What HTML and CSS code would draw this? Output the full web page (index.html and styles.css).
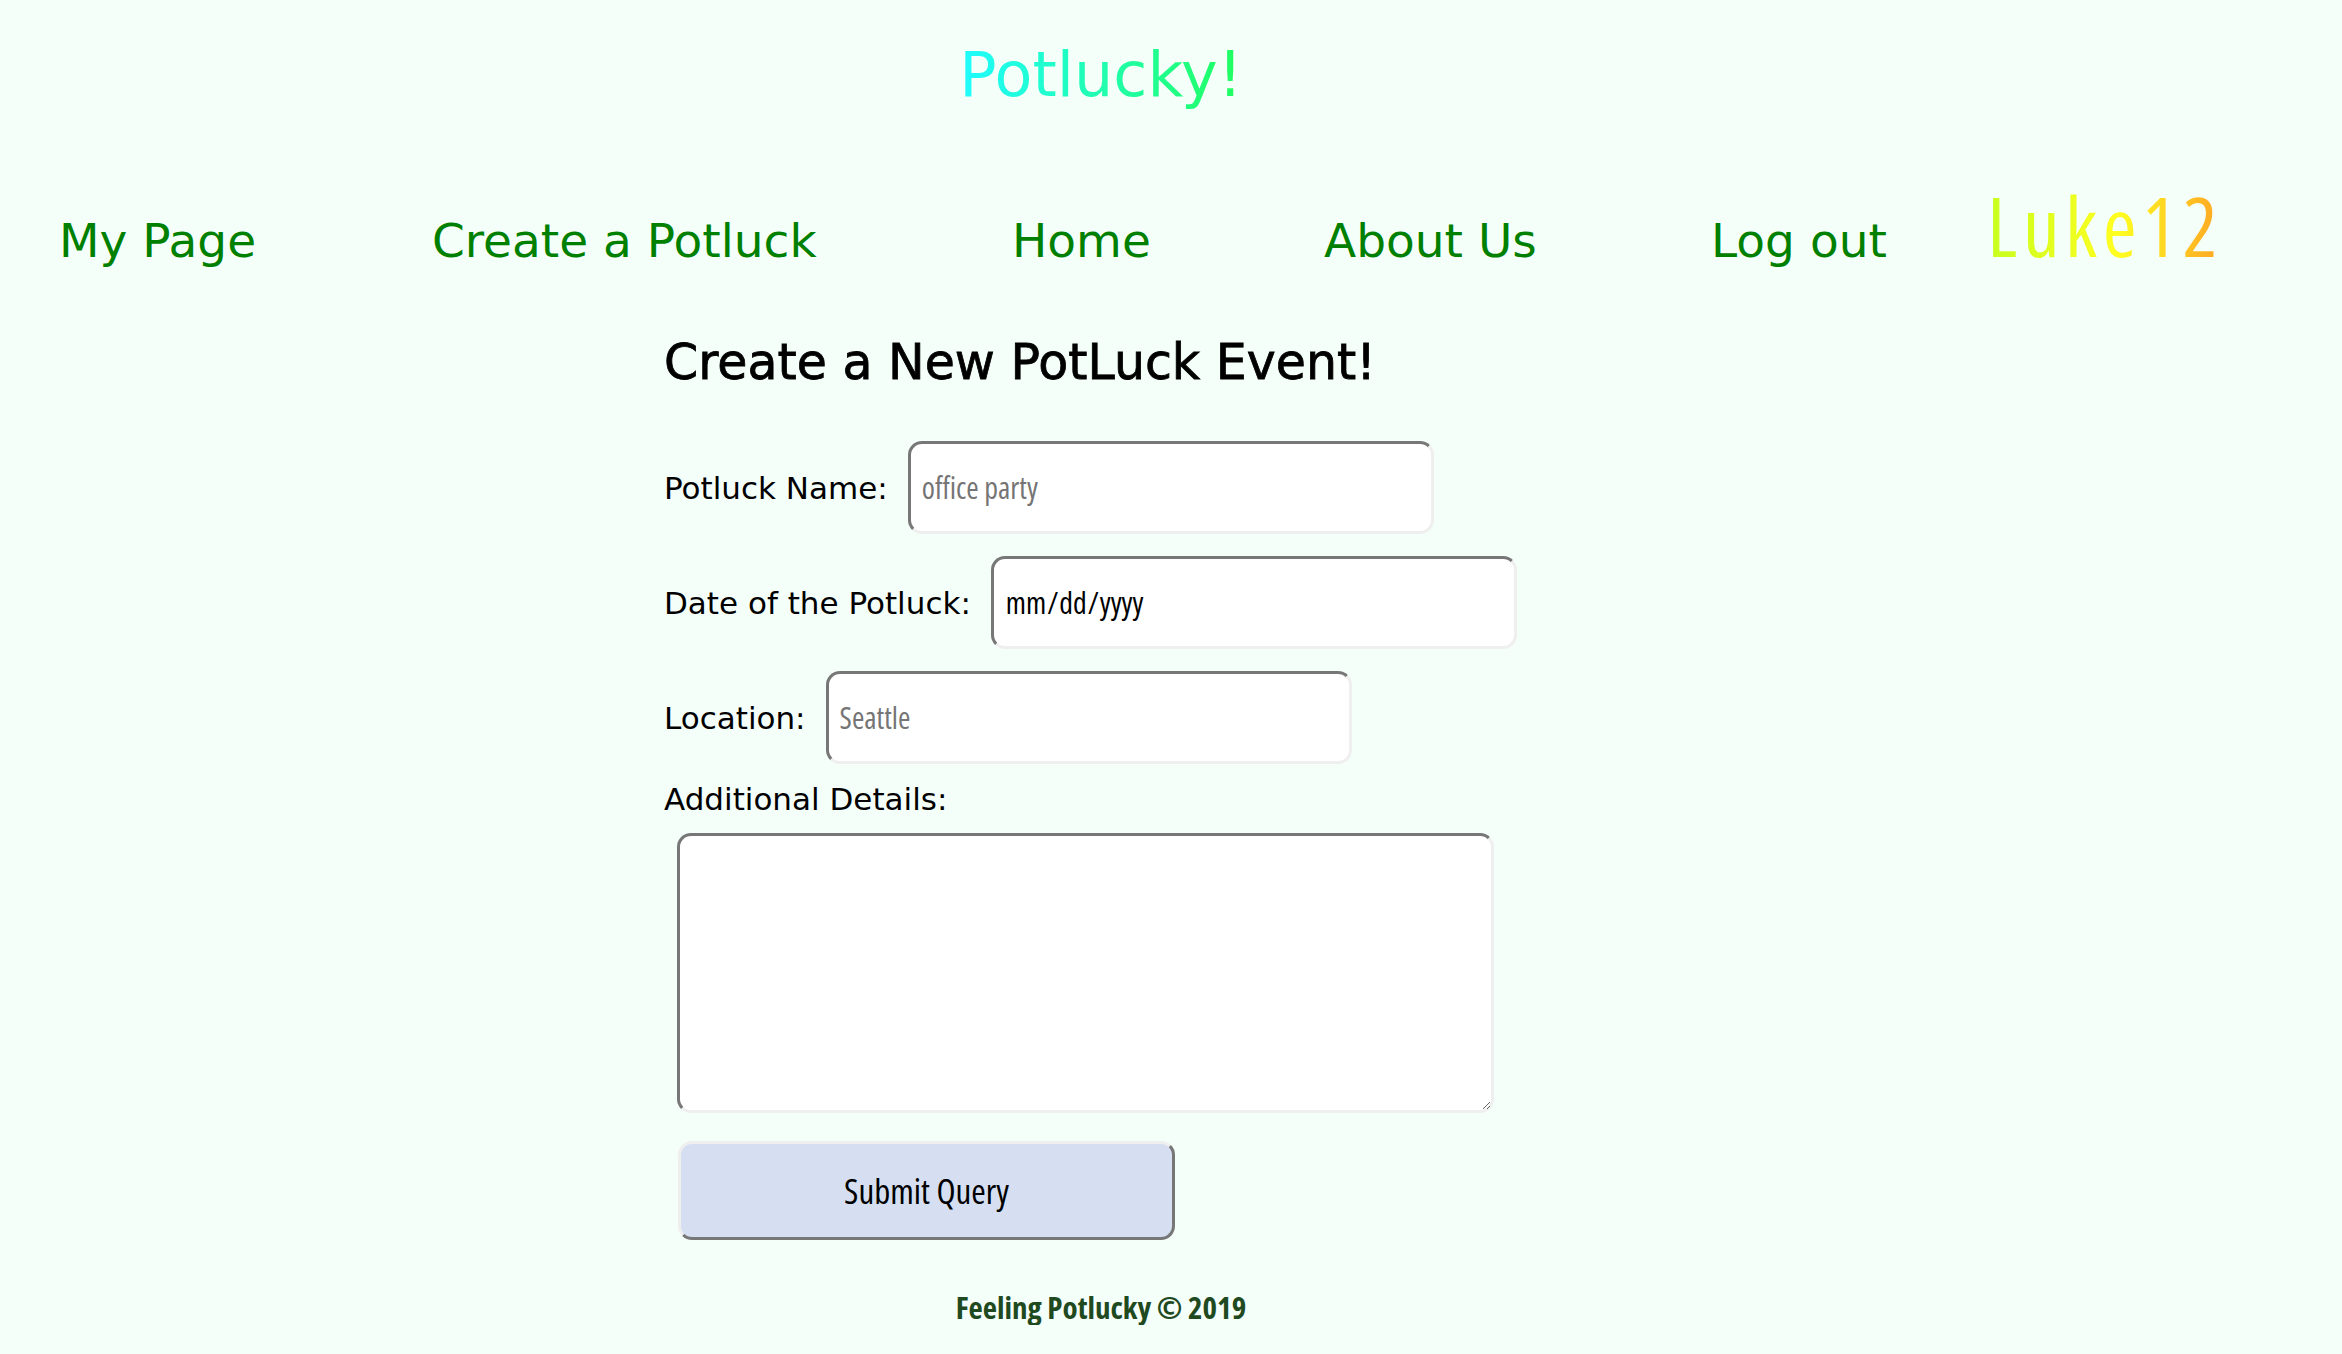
FILE: index.html
```html
<!DOCTYPE html>
<html lang="en">
<head>
<meta charset="utf-8">
<title>Potlucky!</title>
<link rel="stylesheet" href="styles.css">
</head>
<body>
<div class="page">
  <header class="site-header">
    <h1 class="brand">Potlucky!</h1>
  </header>
  <nav class="nav">
    <a class="nav-link" href="#">My Page</a>
    <a class="nav-link" href="#">Create a Potluck</a>
    <a class="nav-link" href="#">Home</a>
    <a class="nav-link" href="#">About Us</a>
    <a class="nav-link" href="#">Log out</a>
    <span class="user">Luke12</span>
  </nav>
  <main class="content">
    <h2 class="form-title">Create a New PotLuck Event!</h2>
    <form class="event-form">
      <div class="row">
        <label class="label" for="name">Potluck Name:</label>
        <input class="field" id="name" type="text" placeholder="office party">
      </div>
      <div class="row">
        <label class="label" for="date">Date of the Potluck:</label>
        <input class="field" id="date" type="date">
      </div>
      <div class="row">
        <label class="label" for="loc">Location:</label>
        <input class="field" id="loc" type="text" placeholder="Seattle">
      </div>
      <label class="label block-label" for="details">Additional Details:</label>
      <textarea class="details" id="details"></textarea>
      <button class="submit" type="button">Submit Query</button>
    </form>
  </main>
  <footer class="footer">Feeling Potlucky © 2019</footer>
</div>
</body>
</html>
```
FILE: styles.css
```css
html, body {
  margin: 0;
  padding: 0;
  background: #f5fffa;
}

body {
  font-family: "DejaVu Sans", "Open Sans", sans-serif;
  color: #000;
}

.page {
  width: 2202px;
}

.site-header {
  text-align: center;
  padding-top: 38px;
}

.brand {
  margin: 0;
  display: inline-block;
  font-size: 62px;
  line-height: 74px;
  font-weight: normal;
  background: linear-gradient(to right, #1ffcff, #21ff5e);
  -webkit-background-clip: text;
  background-clip: text;
  color: transparent;
}

.nav {
  margin-top: 66px;
  padding-left: 59px;
  display: grid;
  grid-template-columns: 373px 580px 312px 387px 276px auto;
  align-items: baseline;
}

.nav-link {
  font-size: 47px;
  line-height: 1.15;
  color: #008000;
  text-decoration: none;
  justify-self: start;
}

.user {
  justify-self: start;
  font-family: "Open Sans", sans-serif;
  font-stretch: 75%;
  font-weight: normal;
  font-size: 82px;
  letter-spacing: 5.5px;
  line-height: 1.15;
  background: linear-gradient(to right, #c6ff1e 0%, #ffff20 55%, #ffa424 100%);
  -webkit-background-clip: text;
  background-clip: text;
  color: transparent;
}

.content {
  padding-left: 664px;
}

.form-title {
  margin: 62px 0 48px;
  font-size: 49px;
  line-height: 1.2;
  font-weight: normal;
  -webkit-text-stroke: 0.8px #000;
}

.event-form {
  display: block;
}

.row {
  display: flex;
  align-items: baseline;
  gap: 20px;
}

.row + .row {
  margin-top: 22px;
}

.label {
  font-size: 31px;
  line-height: 36px;
}

.field {
  box-sizing: border-box;
  width: 526px;
  height: 93px;
  margin: 0;
  padding: 0 11px;
  border-style: solid;
  border-width: 3px;
  border-color: #777 #efefef #efefef #777;
  border-radius: 14px;
  background: #fff;
  font-family: "Open Sans", sans-serif;
  font-stretch: 78%;
  font-weight: normal;
  font-size: 30px;
  color: #000;
  outline: none;
}

.field::placeholder {
  color: #757575;
}

.field::-webkit-calendar-picker-indicator {
  display: none;
}

.block-label {
  display: block;
  margin-top: 17px;
}

.details {
  display: block;
  box-sizing: border-box;
  width: 817px;
  height: 280px;
  margin: 16px 0 0 13px;
  padding: 8px;
  border-style: solid;
  border-width: 3px;
  border-color: #777 #efefef #efefef #777;
  border-radius: 14px;
  background: #fff;
  font-family: "Open Sans", sans-serif;
  font-size: 28px;
  outline: none;
}

.submit {
  display: block;
  box-sizing: border-box;
  width: 497px;
  height: 99px;
  margin: 28px 0 0 14px;
  padding: 0;
  border-style: solid;
  border-width: 3px;
  border-color: #efefef #777 #777 #efefef;
  border-radius: 14px;
  background: #d5dff1;
  font-family: "Open Sans", sans-serif;
  font-stretch: 80%;
  font-weight: normal;
  font-size: 35px;
  color: #000;
}

.footer {
  margin-top: 49px;
  text-align: center;
  font-family: "Open Sans", sans-serif;
  font-stretch: 75%;
  font-weight: bold;
  font-size: 31px;
  line-height: 36px;
  color: #1f4a1f;
}
```
